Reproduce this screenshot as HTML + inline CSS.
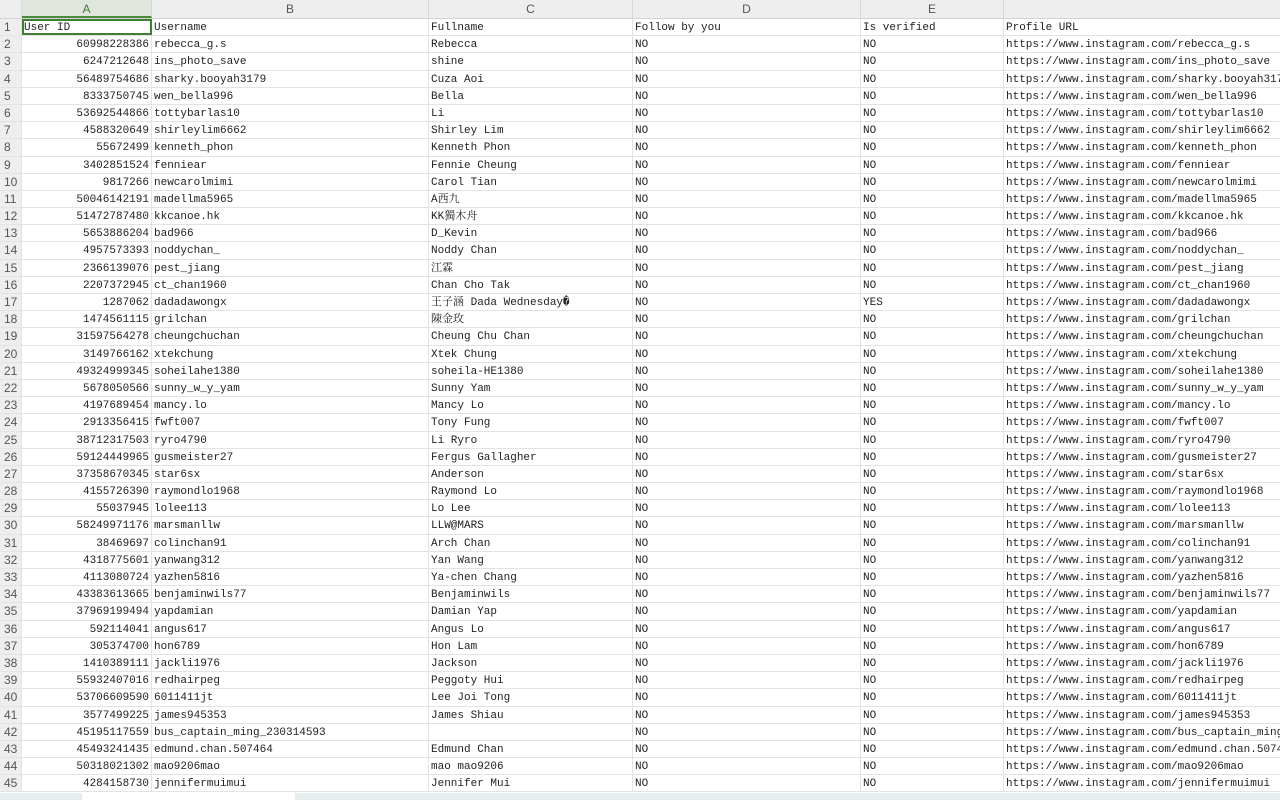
<!DOCTYPE html>
<html><head><meta charset="utf-8"><style>
body{margin:0;width:1280px;height:800px;overflow:hidden;background:#fff;font-family:"Liberation Mono","Noto Serif CJK SC",monospace;font-size:11px;color:#222}
.hd{position:absolute;top:0;left:0;width:1280px;height:18px;background:#eeeeee;border-bottom:1px solid #d4d4d4;font-family:"Liberation Sans",sans-serif;font-size:12px;color:#555}
.hd div{position:absolute;top:0;height:18px;line-height:18px;text-align:center;border-right:1px solid #d8d8d8;box-sizing:border-box}
.g{position:absolute;top:19px;left:0;width:1280px}
.r{height:17.2px;display:flex;border-bottom:1px solid #e3e3e3;box-sizing:border-box;line-height:19px;white-space:nowrap}
.r>div{overflow:hidden;border-right:1px solid #e3e3e3;box-sizing:border-box;padding-left:2px}
.n{width:22px;background:#eeeeee;font-family:"Liberation Sans",sans-serif;font-size:12px;color:#555;padding-left:4px!important;line-height:17px}
.a{width:130px;text-align:right;padding-right:2px}
.b{width:277px}.c{width:204px}.d{width:228px}.e{width:143px}.f{width:276px;border-right:none!important}
.bt{position:absolute;top:793px;left:0;width:1280px;height:7px;background:#e4eeee}
</style></head><body>
<div class="hd">
<div style="left:0;width:22px"></div>
<div style="left:22px;width:130px;background:#e1e6dc;color:#3f7a3f;border-bottom:2px solid #4a8a3a">A</div>
<div style="left:152px;width:277px">B</div>
<div style="left:429px;width:204px">C</div>
<div style="left:633px;width:228px">D</div>
<div style="left:861px;width:143px">E</div>
<div style="left:1004px;width:276px;border:none"></div>
</div>
<div class="g">
<div class="r"><div class="n">1</div><div class="a" style="text-align:left;outline:2px solid #3f7f34;outline-offset:-2px">User ID</div><div class="b">Username</div><div class="c">Fullname</div><div class="d">Follow by you</div><div class="e">Is verified</div><div class="f">Profile URL</div></div>
<div class="r"><div class="n">2</div><div class="a">60998228386</div><div class="b">rebecca_g.s</div><div class="c">Rebecca</div><div class="d">NO</div><div class="e">NO</div><div class="f">https://www.instagram.com/rebecca_g.s</div></div>
<div class="r"><div class="n">3</div><div class="a">6247212648</div><div class="b">ins_photo_save</div><div class="c">shine</div><div class="d">NO</div><div class="e">NO</div><div class="f">https://www.instagram.com/ins_photo_save</div></div>
<div class="r"><div class="n">4</div><div class="a">56489754686</div><div class="b">sharky.booyah3179</div><div class="c">Cuza Aoi</div><div class="d">NO</div><div class="e">NO</div><div class="f">https://www.instagram.com/sharky.booyah3179</div></div>
<div class="r"><div class="n">5</div><div class="a">8333750745</div><div class="b">wen_bella996</div><div class="c">Bella</div><div class="d">NO</div><div class="e">NO</div><div class="f">https://www.instagram.com/wen_bella996</div></div>
<div class="r"><div class="n">6</div><div class="a">53692544866</div><div class="b">tottybarlas10</div><div class="c">Li</div><div class="d">NO</div><div class="e">NO</div><div class="f">https://www.instagram.com/tottybarlas10</div></div>
<div class="r"><div class="n">7</div><div class="a">4588320649</div><div class="b">shirleylim6662</div><div class="c">Shirley Lim</div><div class="d">NO</div><div class="e">NO</div><div class="f">https://www.instagram.com/shirleylim6662</div></div>
<div class="r"><div class="n">8</div><div class="a">55672499</div><div class="b">kenneth_phon</div><div class="c">Kenneth Phon</div><div class="d">NO</div><div class="e">NO</div><div class="f">https://www.instagram.com/kenneth_phon</div></div>
<div class="r"><div class="n">9</div><div class="a">3402851524</div><div class="b">fenniear</div><div class="c">Fennie Cheung</div><div class="d">NO</div><div class="e">NO</div><div class="f">https://www.instagram.com/fenniear</div></div>
<div class="r"><div class="n">10</div><div class="a">9817266</div><div class="b">newcarolmimi</div><div class="c">Carol Tian</div><div class="d">NO</div><div class="e">NO</div><div class="f">https://www.instagram.com/newcarolmimi</div></div>
<div class="r"><div class="n">11</div><div class="a">50046142191</div><div class="b">madellma5965</div><div class="c">A西九</div><div class="d">NO</div><div class="e">NO</div><div class="f">https://www.instagram.com/madellma5965</div></div>
<div class="r"><div class="n">12</div><div class="a">51472787480</div><div class="b">kkcanoe.hk</div><div class="c">KK獨木舟</div><div class="d">NO</div><div class="e">NO</div><div class="f">https://www.instagram.com/kkcanoe.hk</div></div>
<div class="r"><div class="n">13</div><div class="a">5653886204</div><div class="b">bad966</div><div class="c">D_Kevin</div><div class="d">NO</div><div class="e">NO</div><div class="f">https://www.instagram.com/bad966</div></div>
<div class="r"><div class="n">14</div><div class="a">4957573393</div><div class="b">noddychan_</div><div class="c">Noddy Chan</div><div class="d">NO</div><div class="e">NO</div><div class="f">https://www.instagram.com/noddychan_</div></div>
<div class="r"><div class="n">15</div><div class="a">2366139076</div><div class="b">pest_jiang</div><div class="c">江霖</div><div class="d">NO</div><div class="e">NO</div><div class="f">https://www.instagram.com/pest_jiang</div></div>
<div class="r"><div class="n">16</div><div class="a">2207372945</div><div class="b">ct_chan1960</div><div class="c">Chan Cho Tak</div><div class="d">NO</div><div class="e">NO</div><div class="f">https://www.instagram.com/ct_chan1960</div></div>
<div class="r"><div class="n">17</div><div class="a">1287062</div><div class="b">dadadawongx</div><div class="c">王子涵 Dada Wednesday�</div><div class="d">NO</div><div class="e">YES</div><div class="f">https://www.instagram.com/dadadawongx</div></div>
<div class="r"><div class="n">18</div><div class="a">1474561115</div><div class="b">grilchan</div><div class="c">陳金玫</div><div class="d">NO</div><div class="e">NO</div><div class="f">https://www.instagram.com/grilchan</div></div>
<div class="r"><div class="n">19</div><div class="a">31597564278</div><div class="b">cheungchuchan</div><div class="c">Cheung Chu Chan</div><div class="d">NO</div><div class="e">NO</div><div class="f">https://www.instagram.com/cheungchuchan</div></div>
<div class="r"><div class="n">20</div><div class="a">3149766162</div><div class="b">xtekchung</div><div class="c">Xtek Chung</div><div class="d">NO</div><div class="e">NO</div><div class="f">https://www.instagram.com/xtekchung</div></div>
<div class="r"><div class="n">21</div><div class="a">49324999345</div><div class="b">soheilahe1380</div><div class="c">soheila-HE1380</div><div class="d">NO</div><div class="e">NO</div><div class="f">https://www.instagram.com/soheilahe1380</div></div>
<div class="r"><div class="n">22</div><div class="a">5678050566</div><div class="b">sunny_w_y_yam</div><div class="c">Sunny Yam</div><div class="d">NO</div><div class="e">NO</div><div class="f">https://www.instagram.com/sunny_w_y_yam</div></div>
<div class="r"><div class="n">23</div><div class="a">4197689454</div><div class="b">mancy.lo</div><div class="c">Mancy Lo</div><div class="d">NO</div><div class="e">NO</div><div class="f">https://www.instagram.com/mancy.lo</div></div>
<div class="r"><div class="n">24</div><div class="a">2913356415</div><div class="b">fwft007</div><div class="c">Tony Fung</div><div class="d">NO</div><div class="e">NO</div><div class="f">https://www.instagram.com/fwft007</div></div>
<div class="r"><div class="n">25</div><div class="a">38712317503</div><div class="b">ryro4790</div><div class="c">Li Ryro</div><div class="d">NO</div><div class="e">NO</div><div class="f">https://www.instagram.com/ryro4790</div></div>
<div class="r"><div class="n">26</div><div class="a">59124449965</div><div class="b">gusmeister27</div><div class="c">Fergus Gallagher</div><div class="d">NO</div><div class="e">NO</div><div class="f">https://www.instagram.com/gusmeister27</div></div>
<div class="r"><div class="n">27</div><div class="a">37358670345</div><div class="b">star6sx</div><div class="c">Anderson</div><div class="d">NO</div><div class="e">NO</div><div class="f">https://www.instagram.com/star6sx</div></div>
<div class="r"><div class="n">28</div><div class="a">4155726390</div><div class="b">raymondlo1968</div><div class="c">Raymond Lo</div><div class="d">NO</div><div class="e">NO</div><div class="f">https://www.instagram.com/raymondlo1968</div></div>
<div class="r"><div class="n">29</div><div class="a">55037945</div><div class="b">lolee113</div><div class="c">Lo Lee</div><div class="d">NO</div><div class="e">NO</div><div class="f">https://www.instagram.com/lolee113</div></div>
<div class="r"><div class="n">30</div><div class="a">58249971176</div><div class="b">marsmanllw</div><div class="c">LLW@MARS</div><div class="d">NO</div><div class="e">NO</div><div class="f">https://www.instagram.com/marsmanllw</div></div>
<div class="r"><div class="n">31</div><div class="a">38469697</div><div class="b">colinchan91</div><div class="c">Arch Chan</div><div class="d">NO</div><div class="e">NO</div><div class="f">https://www.instagram.com/colinchan91</div></div>
<div class="r"><div class="n">32</div><div class="a">4318775601</div><div class="b">yanwang312</div><div class="c">Yan Wang</div><div class="d">NO</div><div class="e">NO</div><div class="f">https://www.instagram.com/yanwang312</div></div>
<div class="r"><div class="n">33</div><div class="a">4113080724</div><div class="b">yazhen5816</div><div class="c">Ya-chen Chang</div><div class="d">NO</div><div class="e">NO</div><div class="f">https://www.instagram.com/yazhen5816</div></div>
<div class="r"><div class="n">34</div><div class="a">43383613665</div><div class="b">benjaminwils77</div><div class="c">Benjaminwils</div><div class="d">NO</div><div class="e">NO</div><div class="f">https://www.instagram.com/benjaminwils77</div></div>
<div class="r"><div class="n">35</div><div class="a">37969199494</div><div class="b">yapdamian</div><div class="c">Damian Yap</div><div class="d">NO</div><div class="e">NO</div><div class="f">https://www.instagram.com/yapdamian</div></div>
<div class="r"><div class="n">36</div><div class="a">592114041</div><div class="b">angus617</div><div class="c">Angus Lo</div><div class="d">NO</div><div class="e">NO</div><div class="f">https://www.instagram.com/angus617</div></div>
<div class="r"><div class="n">37</div><div class="a">305374700</div><div class="b">hon6789</div><div class="c">Hon Lam</div><div class="d">NO</div><div class="e">NO</div><div class="f">https://www.instagram.com/hon6789</div></div>
<div class="r"><div class="n">38</div><div class="a">1410389111</div><div class="b">jackli1976</div><div class="c">Jackson</div><div class="d">NO</div><div class="e">NO</div><div class="f">https://www.instagram.com/jackli1976</div></div>
<div class="r"><div class="n">39</div><div class="a">55932407016</div><div class="b">redhairpeg</div><div class="c">Peggoty Hui</div><div class="d">NO</div><div class="e">NO</div><div class="f">https://www.instagram.com/redhairpeg</div></div>
<div class="r"><div class="n">40</div><div class="a">53706609590</div><div class="b">6011411jt</div><div class="c">Lee Joi Tong</div><div class="d">NO</div><div class="e">NO</div><div class="f">https://www.instagram.com/6011411jt</div></div>
<div class="r"><div class="n">41</div><div class="a">3577499225</div><div class="b">james945353</div><div class="c">James Shiau</div><div class="d">NO</div><div class="e">NO</div><div class="f">https://www.instagram.com/james945353</div></div>
<div class="r"><div class="n">42</div><div class="a">45195117559</div><div class="b">bus_captain_ming_230314593</div><div class="c"></div><div class="d">NO</div><div class="e">NO</div><div class="f">https://www.instagram.com/bus_captain_ming_230314593</div></div>
<div class="r"><div class="n">43</div><div class="a">45493241435</div><div class="b">edmund.chan.507464</div><div class="c">Edmund Chan</div><div class="d">NO</div><div class="e">NO</div><div class="f">https://www.instagram.com/edmund.chan.507464</div></div>
<div class="r"><div class="n">44</div><div class="a">50318021302</div><div class="b">mao9206mao</div><div class="c">mao mao9206</div><div class="d">NO</div><div class="e">NO</div><div class="f">https://www.instagram.com/mao9206mao</div></div>
<div class="r"><div class="n">45</div><div class="a">4284158730</div><div class="b">jennifermuimui</div><div class="c">Jennifer Mui</div><div class="d">NO</div><div class="e">NO</div><div class="f">https://www.instagram.com/jennifermuimui</div></div>
</div>
<div class="bt"><div style="position:absolute;left:82px;top:0;width:213px;height:7px;background:#fff"></div></div>
</body></html>
